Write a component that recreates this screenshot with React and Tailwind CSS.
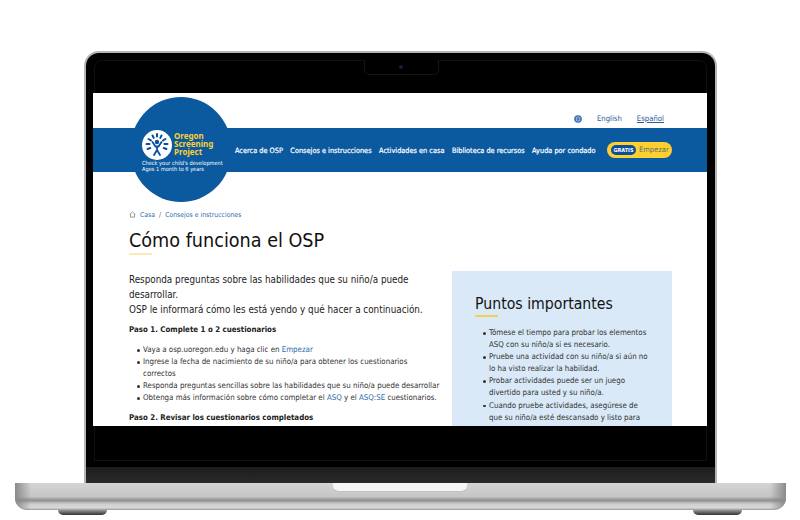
import React from "react";

const navItems = [
  "Acerca de OSP",
  "Consejos e instrucciones",
  "Actividades en casa",
  "Biblioteca de recursos",
  "Ayuda por condado",
];

const tips = [
  "Tómese el tiempo para probar los elementos ASQ con su niño/a si es necesario.",
  "Pruebe una actividad con su niño/a si aún no lo ha visto realizar la habilidad.",
  "Probar actividades puede ser un juego divertido para usted y su niño/a.",
  "Cuando pruebe actividades, asegúrese de que su niño/a esté descansado y listo para jugar.",
];

const OspLogo = () => (
  <svg viewBox="0 0 30 30" className="w-[30px] h-[30px] shrink-0">
    <circle cx="15" cy="15" r="15" fill="#fff" />
    <g fill="none" stroke="#0b4f9c" strokeLinecap="round">
      <path strokeWidth="2" d="M15 4v2.500M10.500 5.500l1.200 2.400M19.500 5.500l-1.200 2.400M6.500 9l2.400 1.400M23.500 9l-2.400 1.400M4.500 14h3M25.500 14h-3M5.500 19l2.800-1M24.500 19l-2.800-1" />
      <path strokeWidth="1.800" d="M10.500 12l3 4.500h3l3-4.500M15 16.500v3.500M15 20l-3 5M15 20l3 5" />
    </g>
    <circle cx="15" cy="12" r="2.200" fill="#0b4f9c" />
  </svg>
);

const Bullet = ({ children }) => (
  <li className="flex gap-[3.5px]">
    <span className="mt-[5px] w-[2.5px] h-[2.5px] rounded-full bg-[#333] shrink-0" />
    <span>{children}</span>
  </li>
);

const LaptopPage = () => (
  <div className="relative w-[614px] h-[333px] bg-white overflow-hidden font-['DejaVu_Sans_Condensed',sans-serif] text-[#222]">
    {/* language row */}
    <div className="h-[35px] flex items-end justify-end pb-[4px] pr-[43px] text-[7.7px] leading-[10px] text-[#2d5a94]">
      <svg viewBox="0 0 16 16" className="w-[8px] h-[8px] mr-[15px] mb-[1px]" fill="none">
        <circle cx="8" cy="8" r="7.500" fill="#0b4f9c" />
        <path stroke="#fff" strokeWidth="0.900" d="M1 8h14M2 4.500h12M2 11.500h12M8 1c-4 4-4 10 0 14M8 1c4 4 4 10 0 14" />
      </svg>
      <span className="mr-[15px]">English</span>
      <span className="underline">Español</span>
    </div>

    {/* blue nav band */}
    <div className="h-[44px] bg-[#0b5aa0] flex items-center pl-[142px] pr-[35px] justify-between">
      <nav className="pt-[2px] flex gap-[7.5px] text-[7.3px] font-medium text-white whitespace-nowrap [-webkit-text-stroke:0.2px_white]">
        {navItems.map((item) => (
          <span key={item}>{item}</span>
        ))}
      </nav>
      <div className="h-[16px] w-[65px] rounded-full bg-[#fdd030] flex items-center pl-[4px] gap-[3px]">
        <span className="h-[10px] w-[25px] rounded-full bg-[#0b4f9c] text-white text-[5.5px] font-bold flex items-center justify-center">GRATIS</span>
        <span className="text-[7.5px] text-[#5c6f70]">Empezar</span>
      </div>
    </div>

    {/* logo badge over the band */}
    <div className="absolute left-[38px] top-[4px] w-[100px] h-[105px] rounded-full bg-[#0b5aa0] flex flex-col justify-center pl-[11px] pt-[3px]">
      <div className="flex items-center gap-[2px]">
        <OspLogo />
        <div className="-mt-[2px] text-[8px] leading-[8px] font-bold text-[#fdd030] font-['Noto_Sans',sans-serif]">
          Oregon
          <br />
          Screening
          <br />
          Project
        </div>
      </div>
      <div className="text-[5.6px] leading-[6px] text-white whitespace-nowrap">
        Check your child's development
        <br />
        Ages 1 month to 6 years
      </div>
    </div>

    <div className="pl-[36px] pr-[35px]">
      {/* breadcrumb */}
      <div className="mt-[38px] flex items-center text-[6.85px] leading-[10px] text-[#2d6cab]">
        <svg viewBox="0 0 16 16" className="w-[7px] h-[7px] mr-[4px] mb-[1px]" fill="none" stroke="#444" strokeWidth="1.200">
          <path d="M1.500 8L8 2l6.500 6M3.500 7v7h9V7" />
        </svg>
        <span>Casa</span>
        <span className="mx-[4px] text-[#666]">/</span>
        <span>Consejos e instrucciones</span>
      </div>

      <h1 className="mt-[7px] text-[19.6px] leading-[28px] text-[#111]">Cómo funciona el OSP</h1>
      <div className="-mt-[2px] w-[23px] h-[2px] bg-[#fde9b8]" />

      <div className="mt-[17px] flex items-start justify-between">
        {/* main column */}
        <div className="w-[312px]">
          <p className="text-[9.8px] leading-[15px]">
            Responda preguntas sobre las habilidades que su niño/a puede desarrollar.
            <br />
            OSP le informará cómo les está yendo y qué hacer a continuación.
          </p>
          <h2 className="mt-[7px] text-[7.85px] leading-[12px] font-bold">Paso 1. Complete 1 o 2 cuestionarios</h2>
          <ul className="mt-[8px] pl-[8px] text-[7.85px] leading-[12px] text-[#333]">
            <Bullet>
              Vaya a osp.uoregon.edu y haga clic en <span className="text-[#2d6cab]">Empezar</span>
            </Bullet>
            <Bullet>Ingrese la fecha de nacimiento de su niño/a para obtener los cuestionarios correctos</Bullet>
            <Bullet>Responda preguntas sencillas sobre las habilidades que su niño/a puede desarrollar</Bullet>
            <Bullet>
              Obtenga más información sobre cómo completar el <span className="text-[#2d6cab]">ASQ</span> y el <span className="text-[#2d6cab]">ASQ:SE</span> cuestionarios.
            </Bullet>
          </ul>
          <h2 className="mt-[8px] text-[7.85px] leading-[12px] font-bold">Paso 2. Revisar los cuestionarios completados</h2>
        </div>

        {/* side panel */}
        <aside className="w-[220px] h-[200px] -mt-[1px] bg-[#d9e9f7] px-[23px] pt-[22px]">
          <h3 className="text-[15.7px] leading-[21px] text-[#111]">Puntos importantes</h3>
          <div className="mt-[1px] w-[23px] h-[2px] bg-[#f5d050]" />
          <ul className="mt-[10px] pl-[8px] text-[7.85px] leading-[12.1px] text-[#333]">
            {tips.map((tip) => (
              <Bullet key={tip}>{tip}</Bullet>
            ))}
          </ul>
        </aside>
      </div>
    </div>
  </div>
);

export default function App() {
  return (
    <div className="w-[800px] h-[520px] bg-white overflow-hidden flex flex-col items-center pt-[51px]">
      {/* lid */}
      <div className="relative w-[633px] h-[432px] rounded-t-[15px] bg-black border-x-2 border-t-2 border-[#b5b5b5] flex flex-col">
        <div className="absolute left-[8px] right-[8px] top-[7px] bottom-[22px] rounded-t-[8px] border border-[#101010]" />
        <div className="absolute left-[278px] top-[7px] w-[75px] h-[15px] rounded-b-[5px] border-x border-b border-[#151515] bg-black flex items-center justify-center">
          <div className="w-[4px] h-[4px] rounded-full bg-[#14203a]" />
        </div>
        <div className="relative mt-[40px] mx-auto">
          <LaptopPage />
        </div>
        <div className="mt-auto h-[16px] bg-gradient-to-b from-[#1c1c1c] to-[#2b2b2b]" />
      </div>

      {/* base */}
      <div className="relative w-[771px] h-[27px] rounded-b-[12px] bg-[linear-gradient(to_bottom,#d4d4d4_0%,#c6c6c6_50%,#8e8e8e_64%,#cfcfcf_78%,#d8d8d8_92%,#9a9a9a_100%)] overflow-hidden">
        <div className="absolute left-0 top-0 w-[16px] h-full bg-gradient-to-r from-[#8a8a8a] to-transparent" />
        <div className="absolute right-0 top-0 w-[16px] h-full bg-gradient-to-l from-[#8a8a8a] to-transparent" />
        <div className="mx-auto w-[134px] h-[9px] rounded-b-[6px] bg-[#f6f6f6] border-b border-[#c0c0c0]" />
      </div>

      {/* feet */}
      <div className="w-[684px] h-[5px] flex justify-between">
        <div className="w-[49px] h-full rounded-b-[8px] bg-gradient-to-b from-[#999] to-[#333]" />
        <div className="w-[49px] h-full rounded-b-[8px] bg-gradient-to-b from-[#999] to-[#333]" />
      </div>
    </div>
  );
}
